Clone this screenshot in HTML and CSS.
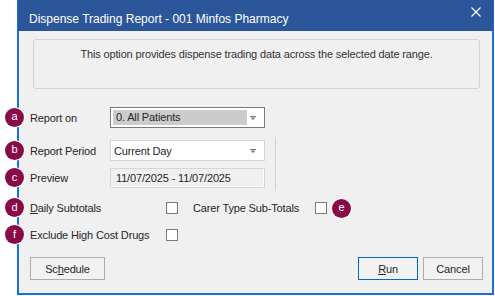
FILE: index.html
```html
<!DOCTYPE html>
<html lang="en">
<head>
    <meta charset="UTF-8">
    <title>Dispense Trading Report</title>
    <link rel="stylesheet" href="styles.css">
</head>
<body>
    <div class="window">
        <div class="titlebar">
            <span class="title">Dispense Trading Report - 001 Minfos Pharmacy</span>
            <svg class="close" width="10" height="10" viewBox="0 0 10 10">
                <path d="M0.5 0.5L9.5 9.5M9.5 0.5L0.5 9.5" stroke="#ffffff" stroke-width="1.1" fill="none"/>
            </svg>
        </div>

        <div class="content">
            <div class="info">This option provides dispense trading data across the selected date range.</div>

            <div class="row row-report">
                <span class="badge badge-side">a</span>
                <span class="label">Report on</span>
                <div class="combo combo-focus">
                    <span class="combo-selected">0. All Patients</span>
                    <svg class="arrow" width="6" height="4" viewBox="0 0 6 4"><path d="M0 0H6V1H0Z M0.5 1.5H5.5L3 4Z" fill="#7a7a7a"/></svg>
                </div>
            </div>

            <div class="period-group">
                <div class="row">
                    <span class="badge badge-side">b</span>
                    <span class="label">Report Period</span>
                    <div class="combo">
                        <span class="combo-text">Current Day</span>
                        <svg class="arrow" width="6" height="4" viewBox="0 0 6 4"><path d="M0 0H6V1H0Z M0.5 1.5H5.5L3 4Z" fill="#7a7a7a"/></svg>
                    </div>
                </div>
                <div class="row">
                    <span class="badge badge-side">c</span>
                    <span class="label">Preview</span>
                    <div class="preview">11/07/2025 - 11/07/2025</div>
                </div>
            </div>

            <div class="row check-row row-daily">
                <span class="badge badge-side">d</span>
                <span class="check-label"><u>D</u>aily Subtotals</span>
                <span class="checkbox"></span>
                <span class="check-label carer">Carer Type Sub-Totals</span>
                <span class="checkbox"></span>
                <span class="badge badge-inline">e</span>
            </div>

            <div class="row check-row row-exclude">
                <span class="badge badge-side">f</span>
                <span class="check-label">Exclude High Cost Drugs</span>
                <span class="checkbox"></span>
            </div>

            <div class="buttons">
                <button class="btn">Sc<u>h</u>edule</button>
                <div class="btn-group">
                    <button class="btn btn-default"><u>R</u>un</button>
                    <button class="btn">Cancel</button>
                </div>
            </div>
        </div>
    </div>
</body>
</html>
```

FILE: styles.css
```css
body {
    margin: 0;
    padding: 0;
    background-color: #ffffff;
    font-family: 'Liberation Sans', Arial, sans-serif;
    font-size: 11px;
    letter-spacing: -0.15px;
    color: #262626;
}

.window {
    margin-left: 17px;
    width: 477px;
    height: 295px;
    box-sizing: border-box;
    background-color: #f0f0f0;
    border: 2px solid #1a6fd6;
    border-top: none;
}

.titlebar {
    height: 31px;
    background-color: #2b579a;
    display: flex;
    align-items: center;
    justify-content: space-between;
    padding: 0 12px 0 11px;
    margin: 0 -1px;
}

.title {
    color: #ffffff;
    font-size: 12px;
    letter-spacing: 0;
    padding-top: 7px;
}

.close {
    align-self: flex-start;
    margin-top: 7px;
}

.content {
    padding: 8px 0 0 11px;
}

.info {
    margin: 0 12px 0 3px;
    height: 50px;
    box-sizing: border-box;
    border: 1px solid #d3d3d3;
    border-radius: 3px;
    text-align: center;
    padding-top: 8px;
    color: #333333;
}

.row {
    position: relative;
    display: flex;
    align-items: center;
}

.row-report {
    margin-top: 18px;
}

.label {
    width: 80px;
}

.badge {
    width: 19px;
    height: 19px;
    border-radius: 50%;
    background-color: #880b47;
    box-shadow: 0 0 0 1px #ffffff;
    color: #ffffff;
    font-size: 11px;
    letter-spacing: 0;
    display: flex;
    align-items: center;
    justify-content: center;
    line-height: 1;
    padding-bottom: 1px;
    box-sizing: border-box;
}

.badge-side {
    position: absolute;
    left: -25px;
    top: 50%;
    margin-top: -10px;
}

.badge-inline {
    margin-left: 5px;
}

.combo {
    width: 155px;
    height: 21px;
    box-sizing: border-box;
    border: 1px solid #d6d6d6;
    background-color: #ffffff;
    display: flex;
    align-items: center;
    justify-content: space-between;
    padding: 0 8px 0 3px;
}

.combo-focus {
    border-color: #7a7a7a;
    padding: 2px 8px 2px 2px;
}

.combo-selected {
    background-color: #cccccc;
    width: 134px;
    height: 15px;
    line-height: 15px;
    padding-left: 3px;
    box-sizing: border-box;
}

.arrow {
    margin-top: 1px;
}

.period-group {
    margin-top: 9px;
    width: 245px;
    border-right: 1px solid #d3d3d3;
    padding: 3px 0;
    display: flex;
    flex-direction: column;
    gap: 7px;
}

.preview {
    width: 155px;
    height: 20px;
    box-sizing: border-box;
    border: 1px solid #d6d6d6;
    box-shadow: inset -1px -1px 0 #ffffff;
    line-height: 18px;
    padding-left: 5px;
}

.check-row {
    height: 16px;
}

.row-daily {
    margin-top: 9px;
}

.row-exclude {
    margin-top: 11px;
}

.check-label {
    width: 136px;
}

.check-label.carer {
    width: 122px;
    margin-left: 15px;
}

.checkbox {
    width: 12px;
    height: 12px;
    box-sizing: border-box;
    border: 1px solid #7a7a7a;
    background-color: #ffffff;
}

.buttons {
    margin-top: 14px;
    display: flex;
    justify-content: space-between;
    padding-right: 9px;
}

.btn-group {
    display: flex;
    gap: 5px;
}

.btn {
    font-family: 'Liberation Sans', Arial, sans-serif;
    font-size: 11px;
    letter-spacing: -0.15px;
    color: #262626;
    width: 75px;
    height: 23px;
    background-color: #f2f2f2;
    border: 1px solid #adadad;
    padding: 0;
}

.btn-group .btn {
    width: 60px;
}

.btn-default {
    border-color: #0a64c8;
}
```
